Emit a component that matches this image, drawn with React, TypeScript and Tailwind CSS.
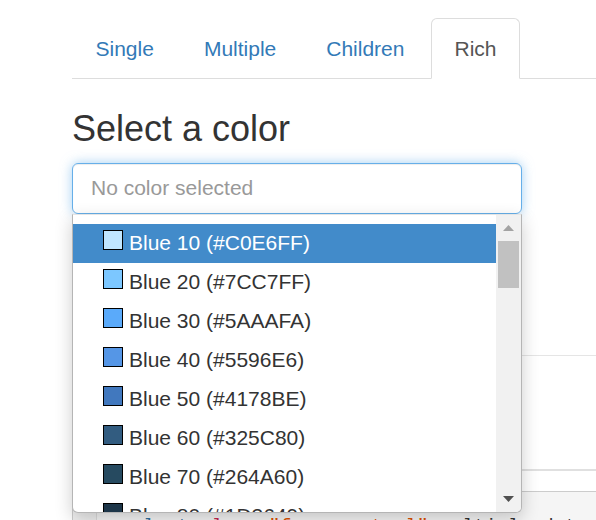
import React from 'react';

const colors: [string, string][] = [
  ['Blue 10', '#C0E6FF'],
  ['Blue 20', '#7CC7FF'],
  ['Blue 30', '#5AAAFA'],
  ['Blue 40', '#5596E6'],
  ['Blue 50', '#4178BE'],
  ['Blue 60', '#325C80'],
  ['Blue 70', '#264A60'],
  ['Blue 80', '#1D3649'],
];

const tabs = ['Single', 'Multiple', 'Children', 'Rich'];

const App: React.FC = () => {
  return (
    <div className="w-[596px] h-[520px] overflow-hidden bg-white font-['Liberation_Sans',Arial,sans-serif] text-[21px] text-[#333]">
      <div className="ml-[72px] w-[640px] pt-[18px]">
        {/* tabs */}
        <ul className="flex border-b border-[#ddd]">
          {tabs.map((t) => {
            const active = t === 'Rich';
            return (
              <li key={t} className="mb-[-1px] mr-[3px]">
                <a
                  className={
                    active
                      ? 'block px-[22.5px] pt-[15px] pb-[14px] leading-[30px] border border-[#ddd] border-b-transparent rounded-t-[6px] bg-white text-[#555]'
                      : 'block px-[22.5px] pt-[15px] pb-[14px] leading-[30px] border border-transparent rounded-t-[6px] text-[#337ab7]'
                  }
                >
                  {t}
                </a>
              </li>
            );
          })}
        </ul>

        <h3 className="mt-[30px] mb-[14px] text-[36px] leading-[1.1] font-normal">Select a color</h3>

        <div className="relative w-[450px]">
          <div className="h-[51px] border border-[#66afe9] rounded-[6px] px-[18px] flex items-center text-[#999] shadow-[inset_0_1px_1px_rgba(0,0,0,0.075),0_0_12px_rgba(102,175,233,0.6)]">
            No color selected
          </div>

          {/* open dropdown */}
          <div className="absolute left-0 top-full z-10 w-[450px] h-[299px] flex bg-white border border-[#b5b5b5] border-t-[#e5e5e5] rounded-b-[6px] overflow-hidden shadow-[0_6px_18px_rgba(0,0,0,0.2)]">
            <div className="flex-1 pt-[9px] overflow-hidden">
              {colors.map(([name, hex], i) => (
                <div
                  key={hex}
                  className={`h-[39px] pl-[30px] leading-[37px] text-[21px] whitespace-nowrap ${
                    i === 0 ? 'bg-[#428bca] text-white' : 'text-[#333]'
                  }`}
                >
                  <span
                    className="inline-block w-[20px] h-[20px] border border-black mr-[6px] align-baseline"
                    style={{ backgroundColor: hex }}
                  />
                  {name} ({hex})
                </div>
              ))}
            </div>
            <div className="w-[25px] bg-[#f1f1f1] flex flex-col items-center">
              <div className="h-[26px] flex items-center justify-center">
                <svg width="11" height="6" viewBox="0 0 11 6">
                  <polygon points="5.5,0 11,6 0,6" fill="#a3a3a3" />
                </svg>
              </div>
              <div className="w-[21px] h-[47px] bg-[#c1c1c1]" />
              <div className="flex-1" />
              <div className="h-[26px] flex items-center justify-center">
                <svg width="11" height="6" viewBox="0 0 11 6">
                  <polygon points="0,0 11,0 5.5,6" fill="#505050" />
                </svg>
              </div>
            </div>
          </div>
        </div>

        {/* content behind the dropdown */}
        <button className="mt-[64px] h-[44px] w-[150px] bg-[#337ab7] border border-[#2e6da4] rounded-[6px] text-white">
          Submit
        </button>
        <div className="mt-[33px] border-t border-[#e5e5e5] h-[114px]" />
        <div className="border-t-2 border-[#e0e0e0] h-[22px]" />
        <div className="flex border-t border-l border-[#ccc] bg-[#f5f5f5] h-[40px]">
          <div className="w-[24px] border-r border-[#ddd] bg-[#f0f0f0]" />
          <pre className="pl-[12px] pt-[22px] font-['Liberation_Mono',monospace] text-[19px] leading-[24px] text-[#333]">
            <span className="text-[#2f6f9f]">&lt;select</span> <span className="text-[#c7254e]">class</span>=
            <span className="text-[#df5000]">"form-control"</span> multiple data-width=<span className="text-[#0086b3]">300</span>
          </pre>
        </div>
      </div>
    </div>
  );
};

export default App;
